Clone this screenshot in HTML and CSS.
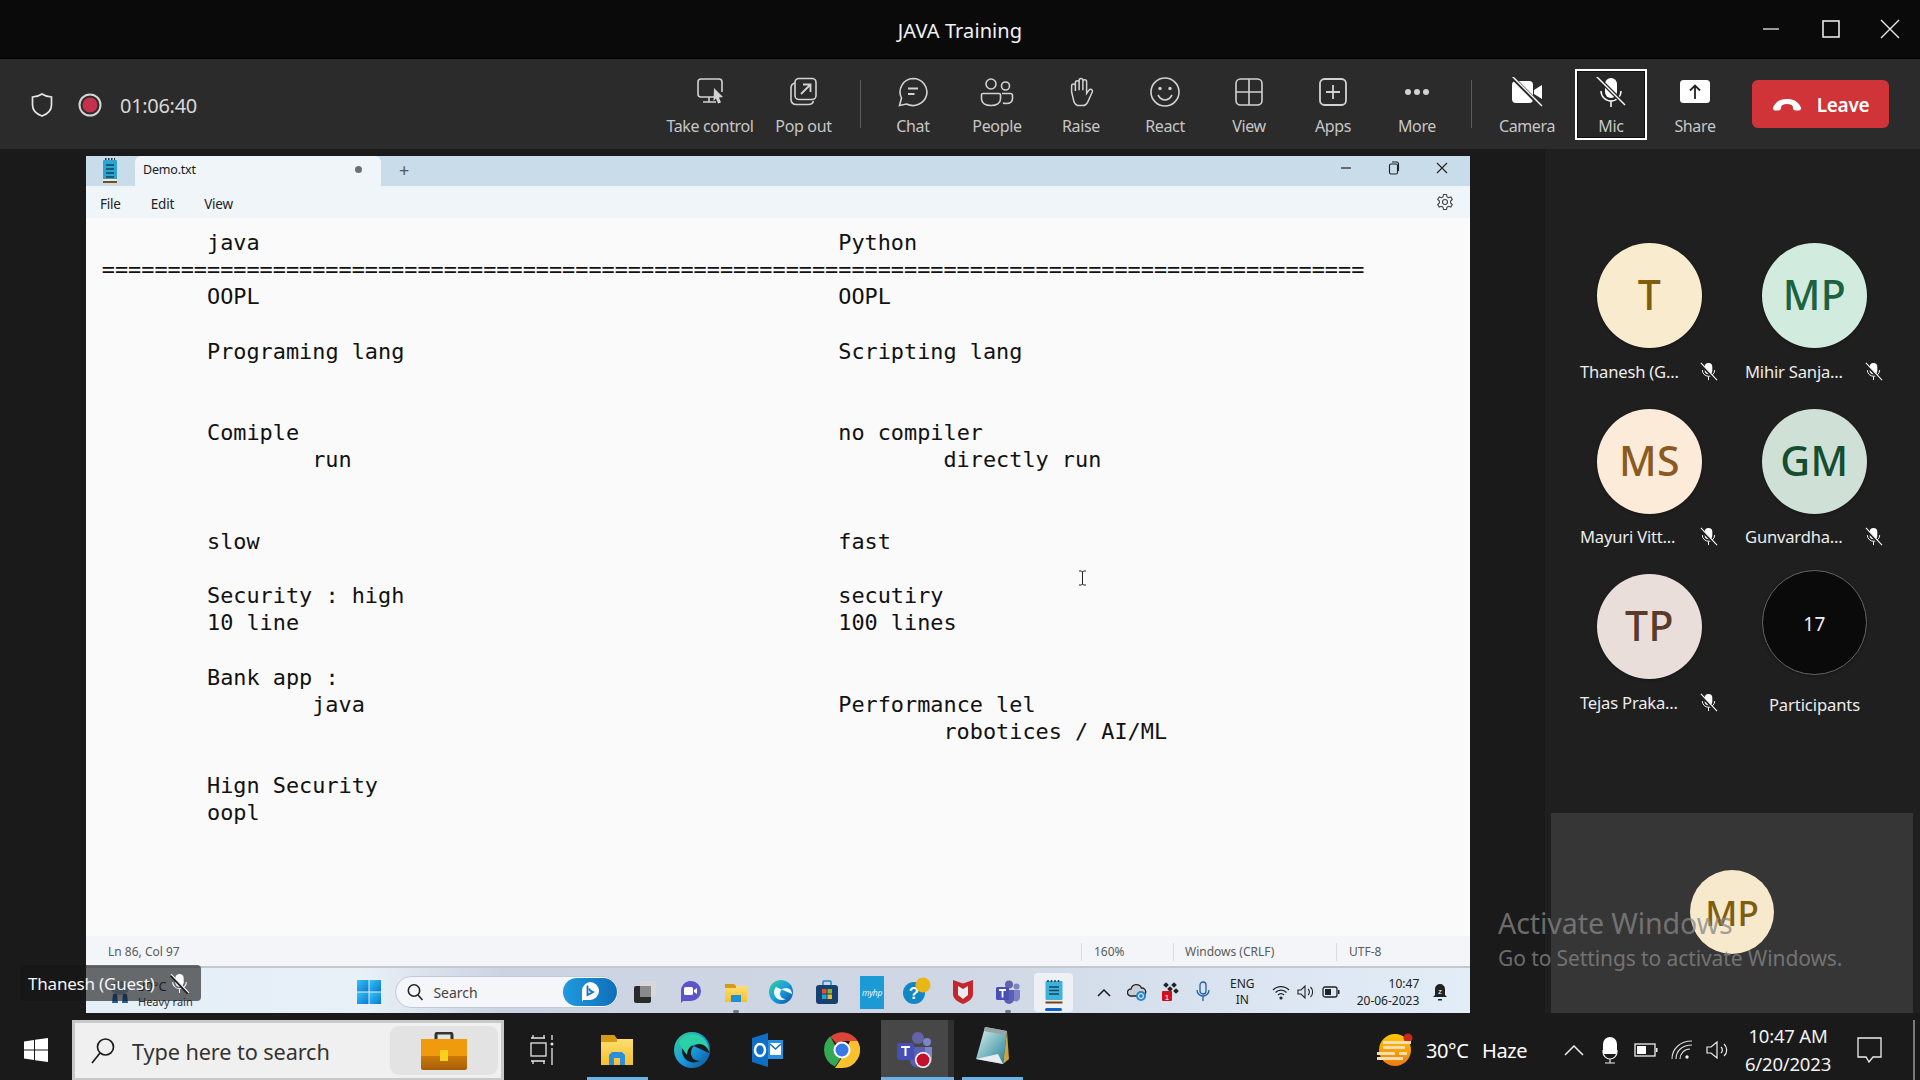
FILE: index.html
```html
<!DOCTYPE html>
<html lang="en">
<head>
<meta charset="utf-8">
<title>JAVA Training</title>
<link rel="stylesheet" href="styles.css">
</head>
<body>
<svg class="defs" width="0" height="0" aria-hidden="true">
  <defs>
    <symbol id="mute" viewBox="0 0 20 20">
      <rect x="6" y="1" width="8" height="12" rx="4" fill="#fff"/>
      <path d="M3.500 8.500a6.500 6.500 0 0 0 13 0M10 15v4" fill="none" stroke="#fff" stroke-width="1"/>
      <path d="M2 2.500 18 19.500" stroke="#1f1f1f" stroke-width="2.500"/>
      <path d="M2 1 19 19" stroke="#fff" stroke-width="1.100"/>
    </symbol>
    <linearGradient id="gEdge" x1="0" y1="0" x2="1" y2="1"><stop offset="0" stop-color="#36d28a"/><stop offset=".5" stop-color="#1b9de2"/><stop offset="1" stop-color="#0b4f94"/></linearGradient>
    <linearGradient id="gFolder" x1="0" y1="0" x2="0" y2="1"><stop offset="0" stop-color="#ffe27a"/><stop offset="1" stop-color="#f6c02f"/></linearGradient>
    <linearGradient id="gSun" x1="0" y1="0" x2="0" y2="1"><stop offset="0" stop-color="#ffc800"/><stop offset="1" stop-color="#ee7a10"/></linearGradient>
    <linearGradient id="gCase" x1="0" y1="0" x2="0" y2="1"><stop offset="0" stop-color="#f49b0c"/><stop offset="1" stop-color="#a85e08"/></linearGradient>
    <linearGradient id="gPad" x1="0" y1="0" x2="1" y2="1"><stop offset="0" stop-color="#dff5f4"/><stop offset="1" stop-color="#1f7f92"/></linearGradient>
    <linearGradient id="gWin" x1="0" y1="0" x2="1" y2="1"><stop offset="0" stop-color="#35c4f4"/><stop offset="1" stop-color="#0a78d0"/></linearGradient>
  </defs>
</svg>

<div class="app">
  <header class="titlebar">
    <div class="title">JAVA Training</div>
    <div class="winctl">
      <svg width="16" height="16" viewBox="0 0 16 16"><path d="M0 8h16" stroke="#e8e8e8" stroke-width="1.3"/></svg>
      <svg width="18" height="18" viewBox="0 0 18 18"><rect x="1" y="1" width="16" height="16" fill="none" stroke="#e8e8e8" stroke-width="1.6"/></svg>
      <svg width="20" height="20" viewBox="0 0 20 20"><path d="M1 1 19 19M19 1 1 19" stroke="#e8e8e8" stroke-width="1.4"/></svg>
    </div>
  </header>

  <nav class="toolbar">
    <div class="status">
      <svg class="shield" width="24" height="26" viewBox="0 0 24 26"><path d="M12 2c3 2 6 3 9.500 3v8c0 5-4 9-9.500 11C6.500 22 2.500 18 2.500 13V5C6 5 9 4 12 2Z" fill="none" stroke="#e6e6e6" stroke-width="1.700"/></svg>
      <svg class="rec" width="24" height="24" viewBox="0 0 24 24"><circle cx="12" cy="12" r="10.500" fill="none" stroke="#d4d4d4" stroke-width="2"/><circle cx="12" cy="12" r="7.500" fill="#c4314b"/></svg>
      <span class="timer">01:06:40</span>
    </div>
    <div class="tools">
      <div class="tool w-take">
        <svg width="32" height="30" viewBox="0 0 32 30" fill="none" stroke="#d2d2d2" stroke-width="1.600"><path d="M24 20h-17a3 3 0 0 1-3-3V5a3 3 0 0 1 3-3h18a3 3 0 0 1 3 3v10"/><path d="M15 20v5M9 25h13"/><path d="M20 11l9 9-4 .5 2 5-3 1-2-5-2.500 2.500Z" fill="#d2d2d2" stroke="none"/></svg>
        <span>Take control</span>
      </div>
      <div class="tool w-pop">
        <svg width="32" height="30" viewBox="0 0 32 30" fill="none" stroke="#d2d2d2" stroke-width="1.600"><rect x="7" y="1.500" width="21" height="21" rx="4"/><path d="M7 6C4.500 6.500 3 8 3 11v11c0 3.500 2 5.500 5.500 5.500h12c3 0 4.500-1.500 5-3.500"/><path d="M13 17 22 8M15 7.500h7.500V15" stroke-width="1.800"/></svg>
        <span>Pop out</span>
      </div>
      <div class="sep"></div>
      <div class="tool">
        <svg width="32" height="30" viewBox="0 0 32 30" fill="none" stroke="#d2d2d2" stroke-width="1.600"><path d="M16 1.500a14 13.500 0 1 1-6.500 25.500L2.500 28.500 4.500 21A13.500 13.500 0 0 1 16 1.500Z"/><path d="M11 11.500h10M11 17h6.500" stroke-width="1.800"/></svg>
        <span>Chat</span>
      </div>
      <div class="tool">
        <svg width="34" height="30" viewBox="0 0 34 30" fill="none" stroke="#d2d2d2" stroke-width="1.600"><circle cx="11" cy="7" r="5"/><circle cx="25.500" cy="9" r="4"/><path d="M3 16.500h16a1.500 1.500 0 0 1 1.500 1.500v4c0 4-4 6.500-9.500 6.500S1.500 26 1.500 22v-4A1.500 1.500 0 0 1 3 16.500Z"/><path d="M22 16.500h8.500a2 2 0 0 1 2 2v3c0 3-2.500 5-6.500 5-1 0-2-.1-3-.5"/></svg>
        <span>People</span>
      </div>
      <div class="tool">
        <svg width="30" height="32" viewBox="0 0 30 32" fill="none" stroke="#d2d2d2" stroke-width="1.600"><path d="M9 15V6a2 2 0 0 1 4 0v8M13 14V3.500a2 2 0 0 1 4 0V14M17 14V5a2 2 0 0 1 4 0v12.500l2.500-3.500c1.500-2 4.500-.5 3.500 2l-5 11c-1 2-2.500 3.500-5 3.500h-4c-3 0-4.500-2-5.500-4L5 16V9.500a2 2 0 0 1 4 0"/></svg>
        <span>Raise</span>
      </div>
      <div class="tool">
        <svg width="32" height="30" viewBox="0 0 32 30" fill="none" stroke="#d2d2d2" stroke-width="1.600"><circle cx="16" cy="15" r="14"/><path d="M9 18c2 3.500 4.500 5 7 5s5-1.500 7-5"/><circle cx="11" cy="11.500" r="1.700" fill="#d2d2d2" stroke="none"/><circle cx="21" cy="11.500" r="1.700" fill="#d2d2d2" stroke="none"/></svg>
        <span>React</span>
      </div>
      <div class="tool">
        <svg width="30" height="30" viewBox="0 0 30 30" fill="none" stroke="#d2d2d2" stroke-width="1.600"><rect x="2" y="2" width="26" height="26" rx="4.500"/><path d="M15 2v26M2 15h26"/></svg>
        <span>View</span>
      </div>
      <div class="tool">
        <svg width="30" height="30" viewBox="0 0 30 30" fill="none" stroke="#d2d2d2" stroke-width="1.800"><rect x="2" y="2" width="26" height="26" rx="4.500"/><path d="M15 8v14M8 15h14"/></svg>
        <span>Apps</span>
      </div>
      <div class="tool">
        <svg width="30" height="30" viewBox="0 0 30 30" fill="#d2d2d2"><circle cx="6" cy="15" r="3"/><circle cx="15" cy="15" r="3"/><circle cx="24" cy="15" r="3"/></svg>
        <span>More</span>
      </div>
      <div class="sep sep-r"></div>
      <div class="tool">
        <svg width="32" height="30" viewBox="0 0 32 30"><rect x="1" y="4" width="21" height="22" rx="4" fill="#fff"/><path d="M23 13l8-5v14l-8-5Z" fill="#fff"/><path d="M1 0 31 30" stroke="#2b2b2b" stroke-width="4"/><path d="M1 -1 31 29" stroke="#fff" stroke-width="1.400"/></svg>
        <span>Camera</span>
      </div>
      <div class="tool tool-on">
        <svg width="32" height="30" viewBox="0 0 32 30"><rect x="10" y="1" width="12" height="20" rx="6" fill="#fff"/><path d="M6 14a10 10 0 0 0 20 0M16 24v6" fill="none" stroke="#fff" stroke-width="1.500"/><path d="M2 0 31 29" stroke="#272727" stroke-width="4"/><path d="M1 -1 30 28" stroke="#fff" stroke-width="1.400"/></svg>
        <span>Mic</span>
      </div>
      <div class="tool">
        <svg width="32" height="30" viewBox="0 0 32 30"><rect x="1" y="3" width="30" height="23" rx="3.500" fill="#fff"/><path d="M16 22V9M11 13.500 16 8.500l5 5" fill="none" stroke="#222" stroke-width="1.800"/></svg>
        <span>Share</span>
      </div>
      <div class="leave">
        <svg width="30" height="14" viewBox="0 0 30 14"><path d="M1 9.500C4 3 9 1 15 1s11 2 14 8.500c.5 1.500-.5 3-2 3h-3.500c-1.500 0-2.500-1-2.500-2.500 0-1.500-.5-2.500-1.500-3-1.500-.7-2.800-1-4.500-1s-3 .3-4.500 1C9.500 7.500 9 8.500 9 10c0 1.500-1 2.500-2.500 2.500H3c-1.500 0-2.500-1.500-2-3Z" fill="#fff"/></svg>
        <span>Leave</span>
      </div>
    </div>
  </nav>

  <main class="stage">
    <section class="notepad">
      <div class="tabstrip">
        <svg class="np-icon" width="18" height="26" viewBox="0 0 18 26"><rect x="2" y="2" width="14" height="20" rx="1" fill="#2fa3d0"/><path d="M4 1h10" stroke="#333" stroke-width="2" stroke-dasharray="1.500 1.500"/><path d="M5 7h8M5 11h8M5 15h8M5 19h8" stroke="#12465f" stroke-width="1.300"/><rect x="2" y="21" width="14" height="2" fill="#efe6d4"/><rect x="2" y="23" width="14" height="2" fill="#7a4a20"/></svg>
        <div class="tab"><span>Demo.txt</span><i class="dot"></i></div>
        <span class="plus">+</span>
        <div class="np-ctl">
          <svg width="12" height="12" viewBox="0 0 12 12"><path d="M1 6h10" stroke="#222" stroke-width="1.200"/></svg>
          <svg width="12" height="14" viewBox="0 0 12 14" fill="none" stroke="#222" stroke-width="1.100"><rect x="1.500" y="3" width="8" height="10" rx="1.500"/><path d="M4 1h4.500a2 2 0 0 1 2 2v7"/></svg>
          <svg width="12" height="12" viewBox="0 0 12 12"><path d="M1 1 11 11M11 1 1 11" stroke="#222" stroke-width="1.100"/></svg>
        </div>
      </div>
      <div class="menubar">
        <span>File</span><span>Edit</span><span>View</span>
        <svg class="gear" width="18" height="18" viewBox="0 0 18 18" fill="none" stroke="#444" stroke-width="1.100"><path d="M7.500 1.500h3l.5 2.300 1.600.9 2.200-.8 1.500 2.600-1.700 1.600v1.800l1.700 1.600-1.500 2.600-2.200-.8-1.600.9-.5 2.300h-3l-.5-2.300-1.600-.9-2.200.8-1.500-2.600L3.400 9.900V8.100L1.700 6.500l1.500-2.600 2.200.8L7 3.800Z"/><circle cx="9" cy="9" r="2.500"/></svg>
      </div>
      <div class="editor">
<pre class="doc">&#9;java&#9;&#9;&#9;&#9;&#9;&#9;Python
================================================================================================
&#9;OOPL&#9;&#9;&#9;&#9;&#9;&#9;OOPL

&#9;Programing lang&#9;&#9;&#9;&#9;&#9;Scripting lang


&#9;Comiple&#9;&#9;&#9;&#9;&#9;&#9;no compiler
&#9;&#9;run&#9;&#9;&#9;&#9;&#9;&#9;directly run


&#9;slow&#9;&#9;&#9;&#9;&#9;&#9;fast

&#9;Security : high&#9;&#9;&#9;&#9;&#9;secutiry
&#9;10 line&#9;&#9;&#9;&#9;&#9;&#9;100 lines

&#9;Bank app :
&#9;&#9;java&#9;&#9;&#9;&#9;&#9;Performance lel
&#9;&#9;&#9;&#9;&#9;&#9;&#9;&#9;robotices / AI/ML

&#9;Hign Security
&#9;oopl</pre>
        <svg class="ibeam" width="9" height="16" viewBox="0 0 9 16"><path d="M1 1h2.500l1 1 1-1H8M1 15h2.500l1-1 1 1H8M4.500 2v12" fill="none" stroke="#222" stroke-width="1"/></svg>
      </div>
      <div class="np-status">
        <span class="st st-pos">Ln 86, Col 97</span>
        <span class="st st-zoom">160%</span>
        <span class="st st-eol">Windows (CRLF)</span>
        <span class="st st-enc">UTF-8</span>
      </div>
      <div class="w11bar">
        <div class="w11-weather">
          <svg width="26" height="24" viewBox="0 0 26 24"><ellipse cx="13" cy="8" rx="9" ry="7" fill="#8fa5c9"/><path d="M6 14l-1 9h6l-1-9ZM16 14l-1 9h6l-1-9Z" fill="#1d5fa8"/></svg>
          <div class="w11-wtext"><span class="w-temp">30°C</span><span class="w-cond">Heavy rain</span></div>
        </div>
        <div class="ti"><svg width="24" height="24" viewBox="0 0 24 24" fill="url(#gWin)"><rect x="0" y="0" width="11.500" height="11.500"/><rect x="12.500" y="0" width="11.500" height="11.500"/><rect x="0" y="12.500" width="11.500" height="11.500"/><rect x="12.500" y="12.500" width="11.500" height="11.500"/></svg></div>
        <div class="w11-search">
          <svg width="18" height="18" viewBox="0 0 18 18" fill="none" stroke="#222" stroke-width="1.600"><circle cx="8" cy="7.500" r="5.700"/><path d="M12 12l4.500 5"/></svg>
          <span>Search</span>
          <div class="bing"><svg width="20" height="22" viewBox="0 0 20 22"><path d="M10 1a9 9 0 0 1 0 18H3l-1 2V10a9 9 0 0 1 8-9Z" fill="#fff"/><path d="M7.500 4.500v9.500l5.500-3-3-1.500-.7-2" fill="none" stroke="#1273c4" stroke-width="1.800"/></svg></div>
        </div>
        <div class="ti"><svg width="24" height="24" viewBox="0 0 24 24"><rect x="7" y="1" width="16" height="16" rx="2" fill="#d8d8da"/><rect x="1" y="6" width="17" height="17" rx="2" fill="#2a2a2a"/><rect x="7" y="6" width="11" height="11" fill="#8a8a8c"/></svg></div>
        <div class="ti"><svg width="24" height="24" viewBox="0 0 24 24"><path d="M11 1h2a10 10 0 0 1 0 20H5l-2 2V11A10 10 0 0 1 11 1Z" fill="#5b55c8"/><rect x="6" y="7" width="9" height="8" rx="1.500" fill="#fff"/><path d="M16 10l3-2v6l-3-2Z" fill="#fff"/></svg></div>
        <div class="ti ti-run"><svg width="24" height="24" viewBox="0 0 24 24"><path d="M1 4h9l2 2h11v16H1Z" fill="url(#gFolder)"/><path d="M1 4h9l2 2v2H1Z" fill="#d79a16"/><rect x="7" y="15" width="10" height="7" fill="#1f90d8"/></svg></div>
        <div class="ti"><svg width="26" height="26" viewBox="0 0 26 26"><circle cx="13" cy="13" r="12" fill="url(#gEdge)"/><path d="M24 15c0-4-3-6-6-6-4 0-6 3-6 6s3 5 6 5c-6 3-12-1-12-7 0-2 1-4 2-5" fill="#fff" fill-opacity=".92"/></svg></div>
        <div class="ti"><svg width="24" height="26" viewBox="0 0 24 26"><path d="M8 6V3a1 1 0 0 1 1-1h6a1 1 0 0 1 1 1v3" fill="none" stroke="#1a8ac8" stroke-width="1.500"/><rect x="1" y="6" width="22" height="19" rx="3" fill="#15406f"/><rect x="7" y="10" width="4.500" height="4.500" fill="#e8502a"/><rect x="12.500" y="10" width="4.500" height="4.500" fill="#7fb92a"/><rect x="7" y="15.500" width="4.500" height="4.500" fill="#1fa2e0"/><rect x="12.500" y="15.500" width="4.500" height="4.500" fill="#f5b81c"/></svg></div>
        <div class="ti"><div class="myhp">myhp</div></div>
        <div class="ti"><svg width="30" height="30" viewBox="0 0 30 30"><circle cx="12" cy="16" r="11" fill="#1187c4"/><text x="12" y="22" text-anchor="middle" font-family="Liberation Sans" font-weight="700" font-size="17" fill="#fff">?</text><circle cx="21" cy="8" r="7.500" fill="#e8b714"/></svg></div>
        <div class="ti"><svg width="22" height="26" viewBox="0 0 22 26"><path d="M1 1l10 3.500L21 1v14c0 5-5 8-10 10C6 23 1 20 1 15Z" fill="#c1272d"/><path d="M6 7v9l5 4 5-4V7l-5 3Z" fill="#e8ecf2"/></svg></div>
        <div class="ti ti-run"><svg width="26" height="24" viewBox="0 0 26 24"><circle cx="14" cy="4.500" r="4" fill="#6264a7"/><circle cx="21.500" cy="6.500" r="3" fill="#7b83c9"/><path d="M18 10h7v8a4 4 0 0 1-7 2Z" fill="#7b83c9"/><path d="M9 10h10v9a5 5 0 0 1-10 0Z" fill="#5b5fb0"/><rect x="1" y="7" width="13" height="13" rx="1.500" fill="#464eb8"/><path d="M4 10h7M7.500 10v7.500" stroke="#fff" stroke-width="1.800"/></svg></div>
        <div class="ti"><div class="ti-active"><svg width="20" height="26" viewBox="0 0 20 26"><rect x="1.500" y="2" width="17" height="19" rx="1" fill="#3fb2dc"/><path d="M4 1v2M7.500 1v2M11 1v2M14.500 1v2" stroke="#12465f" stroke-width="1.500"/><path d="M5 8h10M5 11.500h10M5 15h10" stroke="#12465f" stroke-width="1.300"/><rect x="1.500" y="21" width="17" height="1.500" fill="#f0e6d6"/><rect x="1.500" y="22.500" width="17" height="2" fill="#6e4420"/></svg><i class="active-bar"></i></div></div>
        <div class="tray">
          <div class="tr"><svg width="14" height="9" viewBox="0 0 14 9"><path d="M1 8 7 2l6 6" fill="none" stroke="#1a1a1a" stroke-width="1.500"/></svg></div>
          <div class="tr"><svg width="20" height="20" viewBox="0 0 20 20"><path d="M4 14a3.500 3.500 0 0 1 0-7 5.500 5.500 0 0 1 10.500-1A4 4 0 0 1 15 14Z" fill="#c9ced6" stroke="#222" stroke-width="1.300"/><circle cx="14" cy="14" r="5" fill="#2a86c8"/><circle cx="14" cy="14" r="2.500" fill="none" stroke="#fff"/></svg></div>
          <div class="tr"><svg width="18" height="20" viewBox="0 0 18 20"><g fill="#222"><rect x="3" y="1" width="4" height="4" transform="rotate(45 5 3)"/><rect x="11" y="1" width="4" height="4" transform="rotate(45 13 3)"/><rect x="7" y="5" width="4" height="4" transform="rotate(45 9 7)"/><rect x="13" y="7" width="4" height="4" transform="rotate(45 15 9)"/></g><rect x="1" y="9" width="10" height="10" rx="1" fill="#d0111b"/><text x="6" y="17.500" text-anchor="middle" font-family="Liberation Sans" font-size="8" fill="#fff">1</text></svg></div>
          <div class="tr"><svg width="14" height="22" viewBox="0 0 14 22" fill="none" stroke="#1f5fa8" stroke-width="1.300"><rect x="4" y="1" width="6" height="12" rx="3"/><path d="M1 9a6 6 0 0 0 12 0M7 15v5"/></svg></div>
          <div class="eng"><span>ENG</span><span>IN</span></div>
          <div class="tr2"><svg width="18" height="16" viewBox="0 0 18 16" fill="none" stroke="#222" stroke-width="1.200"><path d="M1 6a11 11 0 0 1 16 0M3.500 8.500a7.500 7.500 0 0 1 11 0M6 11a4 4 0 0 1 6 0"/><circle cx="9" cy="14" r="1" fill="#222"/></svg></div>
          <div class="tr2"><svg width="18" height="16" viewBox="0 0 18 16" fill="none" stroke="#222" stroke-width="1.100"><path d="M1 6v4h3l4 4V2L4 6ZM11 5a4 4 0 0 1 0 6M13.500 3a7 7 0 0 1 0 10"/></svg></div>
          <div class="tr2"><svg width="18" height="12" viewBox="0 0 18 12"><rect x="1" y="1" width="14" height="10" rx="2" fill="none" stroke="#222" stroke-width="1.300"/><rect x="3" y="3" width="6" height="6" fill="#222"/><rect x="16" y="4" width="1.500" height="4" fill="#222"/></svg></div>
          <div class="w11-clock"><span>10:47</span><span>20-06-2023</span></div>
          <div class="bell"><svg width="16" height="20" viewBox="0 0 16 20"><path d="M8 2a5 5 0 0 1 5 5v6l2 2H1l2-2V7a5 5 0 0 1 5-5Z" fill="#222"/><path d="M6 17h4v1.500H6Z" fill="#222"/><text x="8" y="12" text-anchor="middle" font-family="Liberation Sans" font-size="8" fill="#fff">z</text></svg></div>
        </div>
      </div>
    </section>

    <aside class="panel">
      <div class="people">
        <div class="person">
          <div class="avatar a-t">T</div>
          <div class="pname"><span>Thanesh (G...</span><svg width="19" height="19"><use href="#mute"/></svg></div>
        </div>
        <div class="person">
          <div class="avatar a-mp">MP</div>
          <div class="pname"><span>Mihir Sanja...</span><svg width="19" height="19"><use href="#mute"/></svg></div>
        </div>
        <div class="person">
          <div class="avatar a-ms">MS</div>
          <div class="pname"><span>Mayuri Vitt...</span><svg width="19" height="19"><use href="#mute"/></svg></div>
        </div>
        <div class="person">
          <div class="avatar a-gm">GM</div>
          <div class="pname"><span>Gunvardha...</span><svg width="19" height="19"><use href="#mute"/></svg></div>
        </div>
        <div class="person">
          <div class="avatar a-tp">TP</div>
          <div class="pname"><span>Tejas Praka...</span><svg width="19" height="19"><use href="#mute"/></svg></div>
        </div>
        <div class="person person-count">
          <div class="avatar a-count">17</div>
          <div class="plabel">Participants</div>
        </div>
      </div>
      <div class="selftile"><div class="selfav">MP</div></div>
    </aside>

    <div class="nametag"><span>Thanesh (Guest)</span><svg width="21" height="21"><use href="#mute"/></svg></div>
    <div class="activate"><div class="act1">Activate Windows</div><div class="act2">Go to Settings to activate Windows.</div></div>
  </main>

  <footer class="taskbar">
    <div class="start"><svg width="24" height="24" viewBox="0 0 24 24" fill="#fff"><path d="M0 3.500 10 2v9.500H0ZM11 1.800 24 0v11.500H11ZM0 12.500h10V22L0 20.500ZM11 12.500h13V24l-13-1.800Z"/></svg></div>
    <div class="searchbox">
      <svg width="26" height="28" viewBox="0 0 26 28" fill="none" stroke="#1c1c1c" stroke-width="1.700"><circle cx="15.500" cy="10" r="8"/><path d="M10 16 2 26"/></svg>
      <span>Type here to search</span>
      <div class="casepill"><svg width="46" height="38" viewBox="0 0 46 38"><path d="M15 8V3a2 2 0 0 1 2-2h12a2 2 0 0 1 2 2v5" fill="none" stroke="#333" stroke-width="3"/><rect x="0" y="7" width="46" height="31" rx="2" fill="url(#gCase)"/><rect x="0" y="7" width="46" height="17" fill="#f09a0e"/><rect x="19" y="18" width="8" height="11" fill="#f7d21c"/></svg></div>
    </div>
    <div class="tb"><svg width="24" height="32" viewBox="0 0 24 32" fill="none" stroke="#e8e8e8" stroke-width="1.300"><path d="M1 4h14M3 1v3M14 1v3"/><rect x="1" y="9" width="15" height="13"/><path d="M1 27h14M3 27v3M14 27v3M22 1v5M22 14v17"/><circle cx="22" cy="10" r="1.500" fill="#e8e8e8" stroke="none"/></svg></div>
    <div class="tb tb-run"><svg width="34" height="34" viewBox="0 0 34 34"><path d="M1 2h13l3 4h16v26H1Z" fill="url(#gFolder)"/><path d="M1 2h13l3 4v3H1Z" fill="#d79a16"/><path d="M9 32V22l3-3h10l3 3v10h-5v-7h-6v7Z" fill="#2a8fd8"/></svg></div>
    <div class="tb"><svg width="38" height="38" viewBox="0 0 38 38"><circle cx="19" cy="19" r="18" fill="url(#gEdge)"/><path d="M36 22c0-6-4-9-9-9-6 0-9 4-9 9s4 8 9 8c-9 4-18-1-18-11 0-3 1-6 3-8" fill="#1a1a1a"/><path d="M6 12C10 3 22 0 31 8c3 3 5 8 5 12-3-6-8-8-13-7-6 1-9 6-9 11-3-4-6-8-8-12Z" fill="#2ad0a8"/></svg></div>
    <div class="tb"><svg width="34" height="36" viewBox="0 0 34 36"><path d="M2 6 18 1v34L2 30Z" fill="#0f6fc6"/><path d="M18 8h15v19H18Z" fill="#2a8fe0"/><path d="M20 11h11v12H20Z" fill="#fff"/><path d="M20 12l5.500 5 5.500-5" fill="none" stroke="#0f6fc6" stroke-width="1.500"/><ellipse cx="10" cy="18" rx="5" ry="6" fill="none" stroke="#fff" stroke-width="2.500"/></svg></div>
    <div class="tb"><svg width="36" height="36" viewBox="0 0 36 36"><path d="M18 18 6.400 4.700A18 18 0 0 1 33.600 9H18Z" fill="#db4437"/><path d="M2.400 27 6.400 4.700 13 17a5 5 0 0 0 0 2Z" fill="#db4437"/><path d="M0 18A18 18 0 0 1 6 4.600l7 12.400 4.500 8L11 34.600A18 18 0 0 1 0 18Z" fill="#34a853"/><path d="M33.600 9A18 18 0 0 1 18 36l-7 0 8-12 7-15Z" fill="#fbc02d"/><circle cx="18" cy="18" r="8.500" fill="#fff"/><circle cx="18" cy="18" r="6.500" fill="#3b78e7"/></svg></div>
    <div class="tb tb-active tb-run"><svg width="38" height="38" viewBox="0 0 38 38"><circle cx="22" cy="7" r="6" fill="#6264a7"/><circle cx="31" cy="11" r="4" fill="#7b83c9"/><path d="M26 16h10v11a5 5 0 0 1-10 2Z" fill="#7b83c9"/><path d="M14 16h15v13a7.500 7.500 0 0 1-15 0Z" fill="#5b5fb0"/><rect x="1" y="12" width="17" height="17" rx="2" fill="#464eb8"/><path d="M5 16h9M9.500 16v9" stroke="#fff" stroke-width="2"/><circle cx="27" cy="29" r="8" fill="#fff"/><circle cx="27" cy="29" r="6.500" fill="#c4102e"/></svg></div>
    <div class="tb tb-run tb-run-wide"><svg width="36" height="46" viewBox="0 0 36 46"><path d="M11 1 33 5 29 38 2 33Z" fill="url(#gPad)"/><path d="M11 1 33 5 32 9 10 5Z" fill="#9aa3a8"/><path d="M33 5 35 33 29 38Z" fill="#c9a24a"/><path d="M2 33 24 28 29 38Z" fill="#e8ecee"/></svg></div>
    <div class="tbtray">
      <div class="tw"><svg width="36" height="34" viewBox="0 0 36 34"><circle cx="18" cy="17" r="16" fill="url(#gSun)"/><circle cx="31" cy="5" r="4.500" fill="#c8281e"/><g fill="#f3dfae"><rect x="6" y="8" width="28" height="3"/><rect x="6" y="13" width="22" height="3"/><rect x="0" y="19" width="18" height="3"/><rect x="22" y="19" width="8" height="3"/><rect x="0" y="24" width="26" height="3"/></g></svg></div>
      <span class="tw-temp">30°C</span><span class="tw-cond">Haze</span>
      <div class="ts"><svg width="20" height="11" viewBox="0 0 20 11"><path d="M1 10 10 1l9 9" fill="none" stroke="#eee" stroke-width="1.500"/></svg></div>
      <div class="ts"><svg width="16" height="28" viewBox="0 0 16 28"><rect x="1" y="1" width="14" height="17" rx="7" fill="#fff"/><rect x="1" y="8" width="14" height="10" fill="#fff"/><path d="M1 14v2a7 7 0 0 0 14 0v-2M8 23v4M3 27h10" fill="none" stroke="#eee" stroke-width="1.200"/></svg></div>
      <div class="ts"><svg width="24" height="14" viewBox="0 0 24 14"><rect x="1" y="1" width="20" height="12" fill="none" stroke="#eee" stroke-width="1.300"/><rect x="3" y="3" width="9" height="8" fill="#fff"/><rect x="22" y="5" width="1.500" height="4" fill="#eee"/></svg></div>
      <div class="ts"><svg width="22" height="20" viewBox="0 0 22 20" fill="none" stroke="#ddd" stroke-width="1.100"><path d="M1 19C1 9 9 1 21 1M5 19C5 11 11 5 21 5M9 19c0-5 4-10 10-10"/><circle cx="16" cy="17" r="1.700" fill="#eee" stroke="none"/></svg></div>
      <div class="ts"><svg width="24" height="20" viewBox="0 0 24 20" fill="none" stroke="#eee" stroke-width="1.200"><path d="M1 7v6h4l6 5V2L5 7ZM15 7a4 4 0 0 1 0 6M18 4a8 8 0 0 1 0 12"/></svg></div>
      <div class="tclock"><span>10:47 AM</span><span>6/20/2023</span></div>
      <div class="notif"><svg width="26" height="26" viewBox="0 0 26 26"><path d="M1 1h23v19H16l-4 5-3-5H1Z" fill="none" stroke="#eee" stroke-width="1.300"/></svg></div>
      <div class="edge-line"></div>
    </div>
  </footer>
</div>
</body>
</html>
```

FILE: styles.css
```css
* { box-sizing: border-box; }
html, body { margin: 0; padding: 0; }
body { width: 1920px; height: 1080px; overflow: hidden; background: #1a1a1a; font-family: "Noto Sans", "Open Sans", sans-serif; }
.defs { position: absolute; }
.app { display: flex; flex-direction: column; height: 1080px; }

/* title bar */
.titlebar { height: 59px; flex: none; background: #0a0a0a; border-bottom: 1px solid #000; position: relative; display: flex; align-items: center; justify-content: center; }
.title { color: #f2f2f2; font-size: 20px; letter-spacing: .1px; margin-top: 2px; }
.winctl { position: absolute; right: 20px; top: 19px; display: flex; align-items: center; gap: 43px; }
.winctl svg:last-child { margin-left: -3px; }

/* toolbar */
.toolbar { height: 90px; flex: none; background: #2b2b2b; display: flex; align-items: stretch; padding-right: 30px; }
.status { display: flex; align-items: center; width: 663px; padding-left: 30px; padding-top: 2px; }
.shield { margin-right: 24px; }
.rec { margin-right: 18px; }
.timer { color: #d8d8d8; font-size: 20px; letter-spacing: -.3px; }
.tools { display: flex; align-items: center; }
.tool { width: 84px; height: 71px; display: flex; flex-direction: column; align-items: center; color: #c6c6c6; font-size: 16px; letter-spacing: -.35px; padding-top: 8px; }
.tool svg { height: 30px; flex: none; }
.tool span { line-height: 20px; margin-top: 9px; white-space: nowrap; }
.w-take { width: 94px; }
.w-pop { width: 93px; }
.sep { width: 1px; height: 48px; background: #5c5c5c; margin: 0 10px 0 10px; }
.sep-r { margin: 0 13px 0 12px; }
.tool-on { width: 72px; margin: 0 6px; border: 2px solid #fff; outline: 1px solid #111; outline-offset: -3px; padding-top: 6px; background: #272727; }
.leave { width: 137px; height: 48px; margin-left: 15px; background: #d13438; border-radius: 6px; display: flex; align-items: center; justify-content: center; gap: 15px; color: #fff; font-size: 19px; font-weight: 600; letter-spacing: -.3px; padding-top: 1px; }

/* stage */
.stage { height: 864px; flex: none; position: relative; display: flex; background: #1a1a1a; }
.notepad { width: 1384px; height: 857px; margin: 7px 0 0 86px; background: #fafafa; display: flex; flex-direction: column; }
.tabstrip { height: 30px; flex: none; background: #c9dcea; display: flex; align-items: center; padding-left: 15px; position: relative; }
.np-icon { margin-right: 16px; flex: none; }
.tab { width: 246px; height: 30px; background: #f0f5fa; border-radius: 6px 6px 0 0; display: flex; align-items: center; justify-content: space-between; padding: 0 19px 3px 8px; font-size: 12.500px; letter-spacing: -.2px; color: #1a1a1a; }
.dot { width: 7px; height: 7px; border-radius: 50%; background: #6f6f6f; }
.plus { color: #555; font-size: 18px; margin: 0 0 2px 18px; }
.np-ctl { position: absolute; right: 22px; top: 5px; display: flex; align-items: center; gap: 36px; height: 14px; }
.menubar { height: 32px; flex: none; background: #f0f5fa; display: flex; align-items: center; padding: 3px 0 0 14px; gap: 30px; font-size: 13.500px; letter-spacing: -.2px; color: #222; position: relative; }
.gear { position: absolute; right: 16px; top: 7px; }
.editor { flex: 1; position: relative; background: #fafafa; min-height: 0; }
.doc { margin: 0; padding: 11px 0 0 15.800px; font-family: "DejaVu Sans Mono", "Liberation Mono", monospace; font-size: 21.850px; line-height: 27.150px; color: #111; tab-size: 8; }
.ibeam { position: absolute; left: 992px; top: 352px; }
.np-status { height: 32px; flex: none; background: #f3f5f9; display: flex; align-items: center; padding-top: 2px; font-size: 12px; color: #5a5a5a; border-bottom: 2px solid #c4c8cc; }
.st { height: 18px; line-height: 18px; }
.st-pos { width: 995px; padding-left: 22px; }
.st-zoom { width: 92px; padding-left: 12px; border-left: 1px solid #dcdcdc; }
.st-eol { width: 163px; padding-left: 11px; border-left: 1px solid #dcdcdc; }
.st-enc { padding-left: 12px; border-left: 1px solid #dcdcdc; }

/* windows 11 bar inside the shared window */
.w11bar { height: 45px; flex: none; padding-top: 3px; background: linear-gradient(90deg, #e4eff8 0%, #e8f0f8 20%, #ccd3e2 30%, #cfd6e4 62%, #dbe6f2 85%, #e2edf7 100%); display: flex; align-items: center; position: relative; }
.w11-weather { width: 260px; flex: none; display: flex; align-items: center; padding-left: 21px; gap: 5px; }
.w11-wtext { display: flex; flex-direction: column; font-size: 11px; color: #333; line-height: 15px; margin-top: 4px; }
.w-temp { font-size: 13px; }
.ti { width: 45.400px; height: 42px; flex: none; display: flex; align-items: center; justify-content: center; position: relative; }
.ti svg { display: block; }
.ti-run::after { content: ""; position: absolute; left: 50%; bottom: 0; width: 6px; height: 3px; margin-left: -3px; border-radius: 2px; background: #777; }
.w11-search { width: 224px; height: 32px; flex: none; margin: 0 3px 0 4px; background: #f4f6fa; border: 1px solid #c2cad8; border-radius: 16px; display: flex; align-items: center; padding-left: 10px; gap: 9px; font-size: 14px; color: #444; position: relative; }
.bing { position: absolute; right: 1px; top: 1px; width: 54px; height: 28px; border-radius: 14px; background: linear-gradient(90deg, #1f9ae0, #0f6fb8); display: flex; align-items: center; justify-content: center; }
.myhp { width: 24px; height: 33px; background: #1c9ad6; color: #e8f6fc; font-size: 8.500px; font-style: italic; display: flex; align-items: center; justify-content: center; letter-spacing: -.3px; }
.ti-active { width: 39px; height: 39px; background: #edf1f6; border-radius: 4px; display: flex; align-items: center; justify-content: center; position: relative; }
.active-bar { position: absolute; left: 11px; right: 11px; bottom: 1px; height: 3px; border-radius: 2px; background: #0b63c4; }
.tray { display: flex; align-items: center; margin-left: 11px; height: 42px; }
.tr { width: 33px; display: flex; justify-content: center; }
.tr2 { width: 25px; display: flex; justify-content: center; }
.eng { width: 46px; margin-right: 3px; display: flex; flex-direction: column; align-items: center; font-size: 12px; line-height: 16px; color: #222; }
.w11-clock { width: 76px; display: flex; flex-direction: column; align-items: flex-end; font-size: 12px; line-height: 17px; color: #222; }
.bell { width: 41px; display: flex; justify-content: center; }

/* right panel */
.panel { position: absolute; left: 1545px; top: 0; width: 375px; height: 864px; background: #1f1f1f; display: flex; flex-direction: column; }
.people { display: grid; grid-template-columns: 165px 165px; grid-auto-rows: 165.500px; padding: 94px 0 0 22px; }
.person { display: flex; flex-direction: column; align-items: center; }
.avatar { width: 105px; height: 105px; flex: none; border-radius: 50%; display: flex; align-items: center; justify-content: center; padding-bottom: 3px; font-size: 41px; font-weight: 500; letter-spacing: .5px; box-shadow: 0 1px 3px rgba(0,0,0,.35); }
.a-t { background: #f8ebce; color: #7f5d10; }
.a-mp { background: #d1ebdf; color: #1c6240; }
.a-ms { background: #fcebd9; color: #8a5a20; }
.a-gm { background: #cfe0d6; color: #154d30; }
.a-tp { background: #e9deda; color: #5a3a2a; }
.a-count { background: #0a0a0a; color: #f0f0f0; font-size: 19px; font-weight: 400; border: 1px solid #666; margin-top: -4px; padding: 2px 0 0; }
.pname { width: 139px; margin-top: 12px; height: 22px; display: flex; align-items: center; justify-content: space-between; color: #ececec; font-size: 16.600px; letter-spacing: -.2px; white-space: nowrap; }
.pname svg { flex: none; margin-right: 1px; }
.plabel { color: #ececec; font-size: 16.600px; letter-spacing: -.1px; line-height: 22px; margin-top: 19px; }
.selftile { width: 362px; height: 200px; margin: auto 0 0 6px; background: #363636; display: flex; align-items: center; justify-content: center; }
.selfav { width: 84px; height: 84px; margin-top: -2px; border-radius: 50%; background: #f6e9cc; color: #7f5d10; display: flex; align-items: center; justify-content: center; font-size: 35px; font-weight: 500; }

/* overlays */
.nametag { position: absolute; left: 20px; top: 816px; width: 181px; height: 36px; background: rgba(22,22,22,.62); border-radius: 4px; display: flex; align-items: center; justify-content: space-between; padding: 0 11px 0 8px; color: #f4f4f4; font-size: 17px; letter-spacing: -.2px; white-space: nowrap; }
.activate { position: absolute; left: 1498px; top: 756px; color: rgba(135,135,135,.77); pointer-events: none; }
.act1 { font-size: 28.600px; line-height: 36px; letter-spacing: -.1px; }
.act2 { font-size: 21px; line-height: 28px; margin-top: 3px; letter-spacing: -.1px; }

/* bottom taskbar */
.taskbar { height: 67px; flex: none; background: #1a1a1a; display: flex; align-items: stretch; color: #fff; }
.start { width: 72px; flex: none; display: flex; align-items: center; justify-content: center; padding-top: 7px; }
.searchbox { width: 432px; flex: none; margin-top: 7px; background: #f0f0f0; border: 3px solid #c8c8c8; border-bottom-width: 2px; display: flex; align-items: center; padding: 1px 0 0 15px; color: #333; font-size: 21.700px; letter-spacing: -.1px; position: relative; }
.searchbox span { margin-left: 16px; }
.casepill { position: absolute; right: 3px; top: 3px; bottom: 3px; width: 108px; background: #e3e3e3; border-radius: 9px; display: flex; align-items: center; justify-content: center; }
.tb { width: 75px; flex: none; display: flex; align-items: center; justify-content: center; padding-top: 7px; position: relative; }
.tb-run::after { content: ""; position: absolute; left: 8px; right: 6px; bottom: 0; height: 3px; background: #6cb2e4; }
.tb-active { background: #474747; margin-left: 2px; width: 73px; margin-top: 7px; padding-top: 0; border-right: 6px solid #2f2f2f; }
.tb-active::after { left: 0; right: -6px; }
.tb-run-wide { padding-top: 5px; }
.tbtray { margin-left: 348px; display: flex; align-items: center; padding-top: 7px; }
.tw { width: 36px; display: flex; }
.tw-temp { margin-left: 13px; font-size: 20px; letter-spacing: -.4px; width: 56px; }
.tw-cond { font-size: 20px; letter-spacing: -.4px; width: 74px; }
.ts { width: 36px; display: flex; justify-content: center; }
.tclock { width: 104px; display: flex; flex-direction: column; align-items: center; font-size: 18.500px; line-height: 28px; letter-spacing: -.2px; color: #f2f2f2; }
.notif { width: 60px; display: flex; justify-content: center; }
.edge-line { width: 2px; height: 60px; margin-left: 13px; background: #7a7a7a; }
```
